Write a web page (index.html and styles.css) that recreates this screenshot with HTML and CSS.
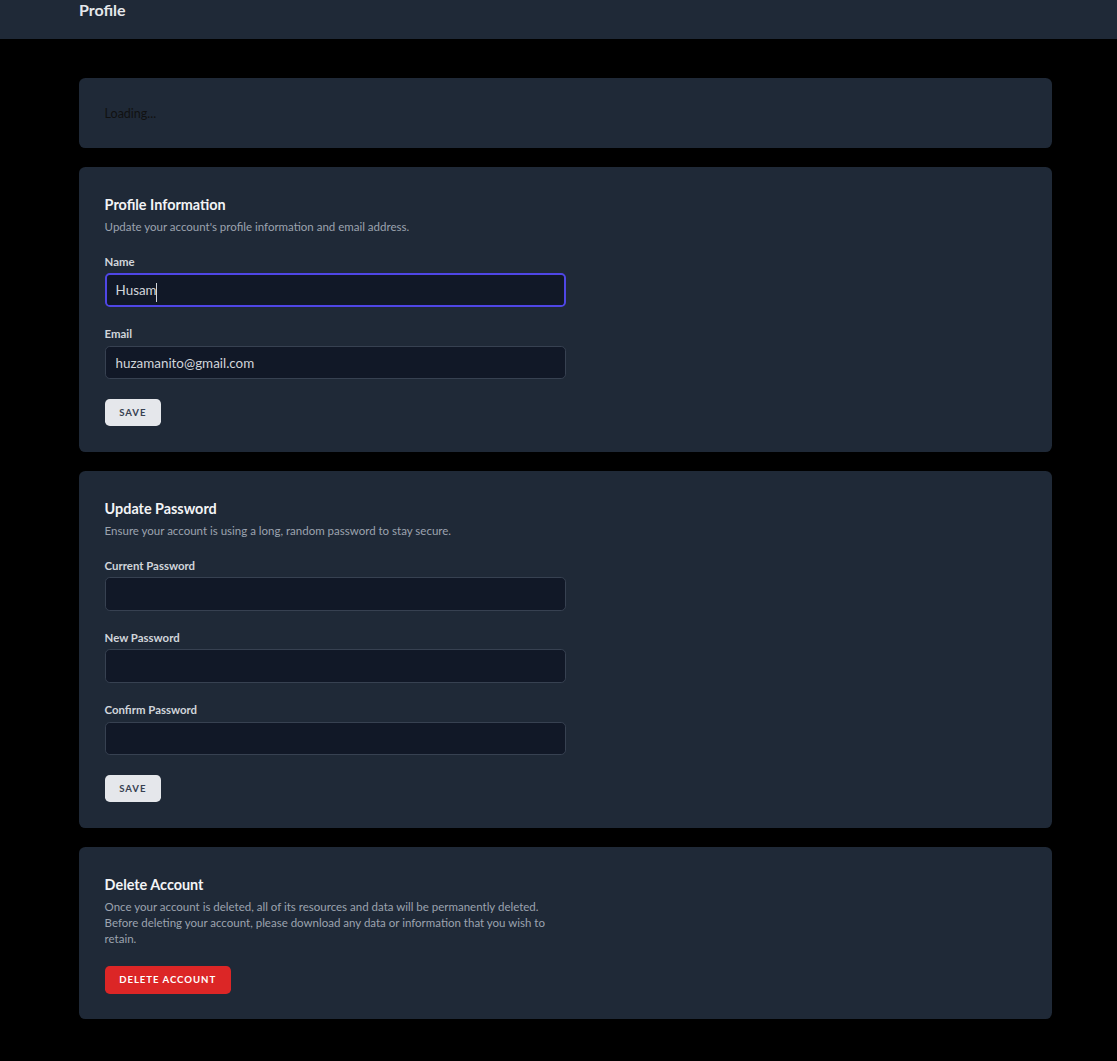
FILE: index.html
```html
<!DOCTYPE html>
<html lang="en">

<head>
    <meta charset="UTF-8">
    <title>Profile</title>
    <link rel="stylesheet" href="styles.css">
</head>

<body>
    <!-- page header -->
    <header class="page-header">
        <div class="wrap">
            <h2 class="page-title">Profile</h2>
        </div>
    </header>

    <main class="page-body">
        <div class="wrap stack">

            <section class="panel">
                <div class="loading">Loading...</div>
            </section>

            <!-- profile info -->
            <section class="panel">
                <div class="panel-inner">
                    <h3 class="panel-title">Profile Information</h3>
                    <p class="panel-desc">Update your account's profile information and email address.</p>

                    <form class="form">
                        <div class="field">
                            <label class="label" for="name">Name</label>
                            <div class="input-box">
                                <input class="input focused" id="name" type="text" value="Husam">
                                <span class="caret"></span>
                            </div>
                        </div>
                        <div class="field">
                            <label class="label" for="email">Email</label>
                            <input class="input" id="email" type="email" value="huzamanito@gmail.com">
                        </div>
                        <div>
                            <button type="button" class="btn btn-light">Save</button>
                        </div>
                    </form>
                </div>
            </section>

            <!-- password -->
            <section class="panel">
                <div class="panel-inner">
                    <h3 class="panel-title">Update Password</h3>
                    <p class="panel-desc">Ensure your account is using a long, random password to stay secure.</p>

                    <form class="form">
                        <div class="field">
                            <label class="label" for="current">Current Password</label>
                            <input class="input" id="current" type="password">
                        </div>
                        <div class="field">
                            <label class="label" for="new">New Password</label>
                            <input class="input" id="new" type="password">
                        </div>
                        <div class="field">
                            <label class="label" for="confirm">Confirm Password</label>
                            <input class="input" id="confirm" type="password">
                        </div>
                        <div>
                            <button type="button" class="btn btn-light">Save</button>
                        </div>
                    </form>
                </div>
            </section>

            <!-- delete -->
            <section class="panel">
                <div class="panel-inner">
                    <h3 class="panel-title">Delete Account</h3>
                    <p class="panel-desc">Once your account is deleted, all of its resources and data will be permanently deleted. Before deleting your account, please download any data or information that you wish to retain.</p>
                    <div class="actions">
                        <button type="button" class="btn btn-danger">Delete Account</button>
                    </div>
                </div>
            </section>

        </div>
    </main>
</body>

</html>
```

FILE: styles.css
```css
* {
    box-sizing: border-box;
}

body {
    margin: 0;
    background: #000;
    font-family: Lato, "Liberation Sans", sans-serif;
    color: #d1d5db;
}

.wrap {
    width: 973px;
    margin-left: 79px;
}

/* header */
.page-header {
    background: #1f2937;
    height: 39px;
    overflow: hidden;
}

.page-title {
    margin: -1px 0 0;
    font-size: 16px;
    line-height: 22px;
    font-weight: 700;
    color: #e5e7eb;
}

/* body */
.page-body {
    padding: 39px 0 40px;
}

.stack {
    display: flex;
    flex-direction: column;
    gap: 19.2px;
}

.panel {
    background: #1f2937;
    border-radius: 6.4px;
    padding: 25.6px;
}

.loading {
    color: #111;
    font-size: 12.5px;
    line-height: 19px;
}

.panel-inner {
    max-width: 461px;
}

.panel-title {
    margin: 0;
    padding-top: 1.5px;
    font-size: 14.4px;
    line-height: 21.4px;
    font-weight: 700;
    color: #f3f4f6;
}

.panel-desc {
    margin: 3.2px 0 0;
    font-size: 11.5px;
    line-height: 16px;
    color: #9ca3af;
}

.form {
    margin-top: 19.2px;
    display: flex;
    flex-direction: column;
    gap: 19.2px;
}

.label {
    display: block;
    font-size: 11.4px;
    line-height: 16px;
    font-weight: 700;
    color: #d1d5db;
}

.input-box {
    position: relative;
}

.input {
    display: block;
    width: 100%;
    height: 33.8px;
    margin-top: 3.2px;
    padding: 0 10px;
    background: #111827;
    border: 1px solid #374151;
    border-radius: 4.8px;
    color: #d1d5db;
    font-family: inherit;
    font-size: 13.4px;
    outline: none;
}

.input.focused {
    border: 2px solid #4f46e5;
    padding: 0 9px;
}

.caret {
    position: absolute;
    left: 51px;
    top: 10px;
    width: 1px;
    height: 19px;
    background: #d1d5db;
}

.actions {
    margin-top: 19.2px;
}

.btn {
    display: inline-flex;
    align-items: center;
    height: 27.8px;
    padding: 0 13.6px;
    border: 1px solid transparent;
    border-radius: 4.8px;
    font-family: inherit;
    font-size: 9.6px;
    font-weight: 700;
    letter-spacing: 0.1em;
    text-transform: uppercase;
    cursor: pointer;
}

.btn-light {
    background: #e5e7eb;
    color: #374151;
}

.btn-danger {
    background: #dc2626;
    color: #fff;
}
```
